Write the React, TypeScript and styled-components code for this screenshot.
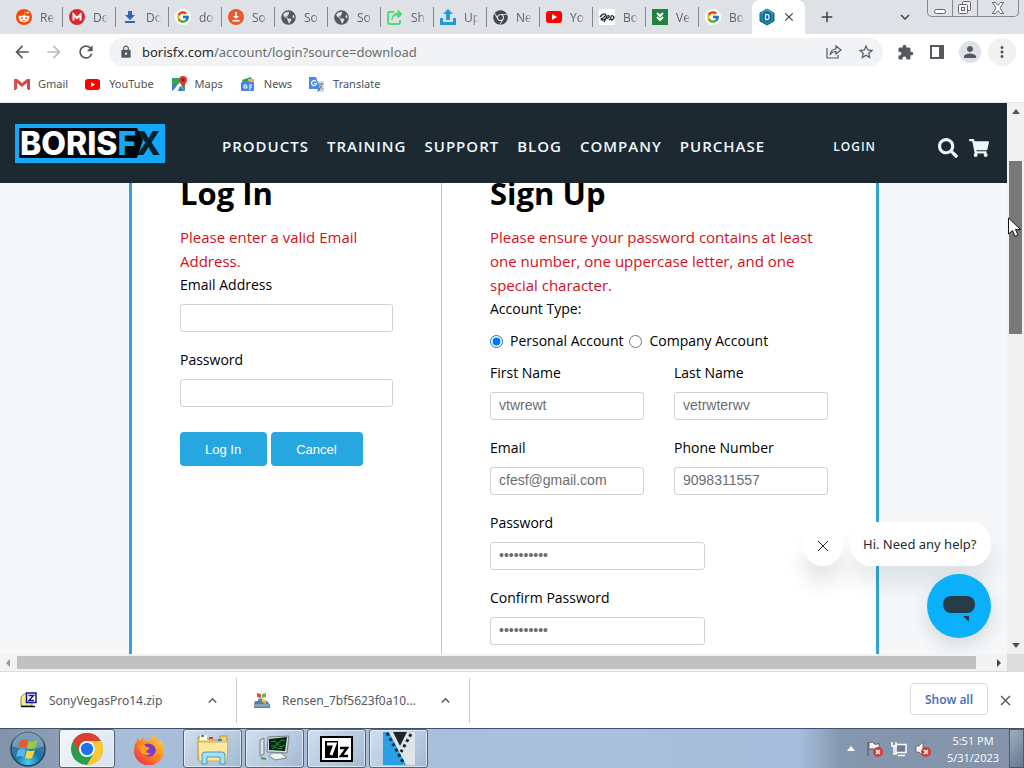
import React from 'react';
import styled, { createGlobalStyle } from 'styled-components';
import { FaChrome, FaSearch, FaShoppingCart, FaRedditAlien, FaGlobeAmericas } from 'react-icons/fa';
import { FcGoogle } from 'react-icons/fc';
import {
  MdArrowBack, MdArrowForward, MdRefresh, MdLock, MdStarBorder, MdExtension, MdPerson, MdMoreVert,
  MdClose, MdAdd, MdKeyboardArrowUp, MdKeyboardArrowDown,
} from 'react-icons/md';

const ui = '"Open Sans", "Noto Sans", sans-serif';
const noto = '"Noto Sans", "Open Sans", sans-serif';
const arial = '"Liberation Sans", Arial, sans-serif';

const Global = createGlobalStyle`
  * { box-sizing: border-box; }
  body { margin: 0; overflow: hidden; font-family: ${ui}; }
  button, input { font: inherit; margin: 0; }
  button { border: 0; padding: 0; background: none; color: inherit; }
  a { color: inherit; text-decoration: none; }
  p, h1 { margin: 0; }
  svg { display: block; flex: none; }
`;

const Desktop = styled.div`
  display: flex;
  flex-direction: column;
  height: 100vh;
  background: #fff;
`;

/* ---------- tab strip ---------- */
const TabStrip = styled.div`
  display: flex;
  flex: none;
  height: 34px;
  padding-left: 10px;
  background: #dee1e6;
  color: #5f6368;
`;
const Tab = styled.button`
  display: flex;
  align-items: center;
  gap: 8px;
  flex: none;
  width: 53px;
  height: 34px;
  padding-left: 6px;
  font-size: 12px;
  &::after {
    content: '';
    width: 1px;
    height: 20px;
    margin-left: -1px;
    background: #84888d;
  }
  &:nth-child(14)::after { background: none; }
`;
const TabTitle = styled.span`
  flex: 1;
  overflow: hidden;
  white-space: nowrap;
  text-align: left;
  -webkit-mask-image: linear-gradient(90deg, #000 60%, transparent 100%);
  mask-image: linear-gradient(90deg, #000 60%, transparent 100%);
`;
const ActiveTab = styled.div`
  display: flex;
  align-items: center;
  justify-content: space-between;
  flex: none;
  width: 53px;
  padding: 0 9px 0 7px;
  border-radius: 8px 8px 0 0;
  background: #fff;
  color: #3c4043;
`;
const StripButton = styled.button`
  display: grid;
  place-items: center;
  width: 44px;
  color: #3c4043;
`;
const Spacer = styled.div`
  flex: 1;
`;
const WindowButtons = styled.div`
  display: grid;
  grid-template-columns: 24px 25px 1fr;
  width: 92px;
  height: 17px;
  margin: 0 5px 0 0;
  border: 1px solid #85898e;
  border-top: 0;
  border-radius: 0 0 5px 5px;
`;
const WindowButton = styled.button`
  display: grid;
  place-items: center;
  & + & { border-left: 1px solid #85898e; }
`;

/* ---------- toolbar ---------- */
const Toolbar = styled.div`
  display: flex;
  align-items: center;
  flex: none;
  height: 36px;
  padding: 0 8px 0 12px;
  color: #55595e;
`;
const NavButtons = styled.div`
  display: flex;
  gap: 12px;
  margin-right: 13px;
`;
const IconButton = styled.button<{ $muted?: boolean }>`
  display: grid;
  place-items: center;
  width: 20px;
  height: 20px;
  color: ${(p) => (p.$muted ? '#b9bbbe' : 'inherit')};
`;
const Omnibox = styled.form`
  display: flex;
  align-items: center;
  flex: 1;
  height: 28px;
  padding: 0 7px 0 10px;
  gap: 9px;
  border-radius: 14px;
  background: #f1f3f4;
`;
const Url = styled.label`
  flex: 1;
  font-family: ${noto};
  font-size: 13px;
  color: #6a6e73;
  b { font-weight: 400; color: #27292c; }
`;
const BoxIcons = styled.div`
  display: flex;
  gap: 12px;
`;
const ToolIcons = styled.div`
  display: flex;
  align-items: center;
  gap: 12px;
  margin-left: 12px;
`;
const Avatar = styled.button`
  display: grid;
  place-items: center;
  width: 22px;
  height: 22px;
  border-radius: 50%;
  background: #dde1e8;
`;
const MenuButton = styled.button`
  display: grid;
  place-items: center;
  width: 28px;
  height: 28px;
  margin-left: -5px;
  border-radius: 50%;
  background: #f1f1f2;
`;

/* ---------- bookmarks ---------- */
const Bookmarks = styled.nav`
  display: flex;
  align-items: center;
  flex: none;
  gap: 17px;
  height: 33px;
  padding: 0 14px 5px;
  border-bottom: 1px solid #e4e6e8;
  font-family: ${noto};
  font-size: 11px;
  color: #505357;
`;
const Bookmark = styled.a`
  display: flex;
  align-items: center;
  gap: 8px;
`;

/* ---------- web page ---------- */
const Viewport = styled.main`
  display: grid;
  grid-template-columns: 1fr 17px;
  grid-template-rows: 1fr 18px;
  flex: 1;
  min-height: 0;
`;
const Page = styled.div`
  display: flex;
  flex-direction: column;
  position: relative;
  min-height: 0;
  overflow: hidden;
  background: #f5f7f9;
`;
const SiteHeader = styled.header`
  display: flex;
  align-items: center;
  flex: none;
  height: 80px;
  padding: 0 18px 0 15px;
  background: #1d2931;
  color: #eef7fb;
`;
const SiteNav = styled.nav`
  display: flex;
  gap: 18px;
  margin: 6px 0 0 57px;
  font-size: 15px;
  font-weight: 600;
  letter-spacing: 1px;
`;
const LoginLink = styled.a`
  margin: 6px 62px 0 0;
  font-size: 12px;
  font-weight: 600;
  letter-spacing: 1px;
`;
const HeaderIcons = styled.div`
  display: flex;
  gap: 11px;
  margin-top: 10px;
`;
const Panel = styled.section`
  display: grid;
  grid-template-columns: 310px 1fr;
  flex: 1;
  min-height: 0;
  margin: 0 128px 0 129px;
  border: solid #33a4d3;
  border-width: 0 3px;
  background: #fff;
  color: #000;
  font-size: 14px;
  line-height: 24px;
`;
const Column = styled.form<{ $divided?: boolean }>`
  padding: 0 48px;
  border-right: ${(p) => (p.$divided ? '1px solid #c4c4c4' : '0')};
`;
const Title = styled.h1`
  margin-bottom: 21px;
  font-size: 31px;
  font-weight: 700;
  line-height: 21px;
`;
const ErrorText = styled.p`
  color: #d40f20;
  font-size: 15px;
`;
const Field = styled.div<{ $width?: string }>`
  display: flex;
  flex-direction: column;
  width: ${(p) => p.$width ?? '100%'};
  height: 75px;
`;
const TextInput = styled.input`
  width: 100%;
  height: 28px;
  margin-top: 7px;
  padding: 0 8px 2px;
  border: 1px solid #d2d2d2;
  border-radius: 3px;
  outline: 0;
  background: #fff;
  color: #6a6e70;
  font-family: ${arial};
  font-size: 14px;
`;
const Buttons = styled.div`
  display: flex;
  gap: 4px;
  margin-top: 9px;
`;
const Primary = styled.button`
  height: 34px;
  padding: 2px 26px 0 25px;
  border-radius: 4px;
  background: #27a7df;
  color: #fff;
  font-family: ${arial};
  font-size: 13px;
`;
const RadioRow = styled.div`
  display: flex;
  gap: 6px;
  margin: 8px 0;
  white-space: nowrap;
`;
const RadioLabel = styled.label`
  display: flex;
  align-items: center;
  gap: 7px;
  input { width: 13px; height: 13px; accent-color: #0075ff; }
`;
const Pair = styled.div`
  display: grid;
  grid-template-columns: 1fr 1fr;
  gap: 30px;
`;

/* ---------- chat widget ---------- */
const Chat = styled.aside`
  display: flex;
  flex-direction: column;
  align-items: flex-end;
  gap: 8px;
  position: absolute;
  right: 16px;
  bottom: 16px;
`;
const ChatRow = styled.div`
  display: flex;
  gap: 8px;
`;
const ChatClose = styled.button`
  display: grid;
  place-items: center;
  width: 40px;
  height: 40px;
  margin-top: 4px;
  border-radius: 50%;
  background: #fff;
  box-shadow: 0 18px 20px rgba(30, 60, 60, 0.12);
`;
const ChatBubble = styled.div`
  height: 44px;
  min-width: 140px;
  padding: 0 10px 0 12px;
  border-radius: 20px;
  background: #fff;
  box-shadow: 0 18px 20px rgba(30, 60, 60, 0.1);
  color: #1f2a30;
  font-family: ${noto};
  font-size: 13px;
  line-height: 44px;
`;
const ChatOpen = styled.button`
  width: 64px;
  height: 64px;
  border-radius: 50%;
  background: #0bb0fb;
  box-shadow: 0 8px 18px rgba(30, 60, 60, 0.15);
`;

/* ---------- scroll bars ---------- */
const VScroll = styled.div`
  display: flex;
  flex-direction: column;
  align-items: center;
  position: relative;
  padding: 6px 0;
  background: #f1f1f1;
`;
const VThumb = styled.div`
  width: 13px;
  height: 173px;
  margin: 47px 0 auto;
  background: #787878;
`;
const Pointer = styled.svg`
  position: absolute;
  left: 0;
  top: 114px;
`;
const HScroll = styled.div`
  display: flex;
  align-items: center;
  gap: 6px;
  padding: 0 5px;
  border-bottom: 1px solid #dadada;
  background: #f3f3f3;
`;
const HThumb = styled.div`
  flex: 1;
  height: 13px;
  margin-right: 14px;
  background: #c0c0c0;
`;
const Corner = styled.div`
  background: #dcdcdc;
`;

/* ---------- downloads ---------- */
const Shelf = styled.div`
  display: flex;
  align-items: center;
  flex: none;
  height: 56px;
  padding: 0 10px 0 4px;
  color: #55585c;
`;
const Download = styled.div`
  display: flex;
  align-items: center;
  gap: 12px;
  flex: none;
  width: 233px;
  height: 45px;
  padding: 0 15px 0 16px;
  border-right: 1px solid #c9cbcd;
  font-family: ${noto};
  font-size: 12px;
`;
const FileName = styled.span`
  flex: 1;
  white-space: nowrap;
`;
const ShowAll = styled.button`
  width: 78px;
  height: 32px;
  margin: 0 9px 2px 0;
  border: 1px solid #d9dbdf;
  border-radius: 4px;
  color: #4468b5;
  font-size: 12px;
  font-weight: 600;
`;

/* ---------- taskbar ---------- */
const Taskbar = styled.footer`
  display: flex;
  align-items: stretch;
  flex: none;
  height: 40px;
  border-top: 1px solid #3c5270;
  background: linear-gradient(90deg, #7f92aa 0, #8c9fb7 58px, #a8bdd8 120px, #a9bfdb 60%, #a6bedc 78%, #8497ae 82%, #8393a9 100%);
`;
const Start = styled.button`
  display: grid;
  place-items: center;
  width: 55px;
  margin-right: 4px;
`;
const Task = styled.button<{ $width: number; $look?: 'active' | 'plain' }>`
  display: grid;
  place-items: center;
  width: ${(p) => p.$width}px;
  margin-right: 3px;
  border: 1px solid ${(p) => (p.$look === 'plain' ? 'transparent' : '#4d6380')};
  border-radius: 3px;
  background: ${(p) =>
    p.$look === 'plain' ? 'none'
      : p.$look === 'active' ? 'linear-gradient(135deg, #f4f7fb, #d8e1ed)'
        : 'linear-gradient(135deg, #d0deef, #a4bad4)'};
  box-shadow: ${(p) => (p.$look === 'plain' ? 'none' : 'inset 0 0 0 1px rgba(255,255,255,.55)')};
`;
const Tray = styled.div`
  display: flex;
  align-items: center;
  gap: 8px;
`;
const Clock = styled.time`
  width: 68px;
  color: #fff;
  font-size: 11px;
  line-height: 17px;
  text-align: center;
`;
const ShowDesktop = styled.button`
  width: 15px;
  margin-left: 2px;
  border: 1px solid #4a5b70;
  background: linear-gradient(135deg, #a0adbc, #65788f);
`;

const Disc = ({ fill, children }: { fill: string; children: React.ReactNode }) => (
  <svg width="16" height="16" viewBox="0 0 16 16"><circle cx="8" cy="8" r="8" fill={fill} />{children}</svg>
);

const tabs: { title: string; icon: React.ReactNode }[] = [
  { title: 'Re', icon: <Disc fill="#ff4500"><FaRedditAlien x="2" y="2" size={12} color="#fff" /></Disc> },
  { title: 'Do', icon: <Disc fill="#d9272e"><path d="M4.500 11.500V5.500L8 9l3.500-3.500v6" fill="none" stroke="#fff" strokeWidth="2" /></Disc> },
  { title: 'Do', icon: <svg width="16" height="16"><path d="M6 2h4v4h3l-5 5-5-5h3zM3 12h10v2H3z" fill="#2a66bd" /></svg> },
  { title: 'do', icon: <Disc fill="#fff"><FcGoogle x="1" y="1" size={14} /></Disc> },
  { title: 'So', icon: <Disc fill="#f0572b"><path d="M7 3h2v4h2L8 10 5 7h2zM4.500 11h7v1.500h-7z" fill="#fff" /></Disc> },
  { title: 'So', icon: <FaGlobeAmericas size={15} color="#55595e" /> },
  { title: 'So', icon: <FaGlobeAmericas size={15} color="#55595e" /> },
  { title: 'Sh', icon: <svg width="16" height="16" fill="none" stroke="#4fdb74" strokeWidth="2"><path d="M7 3H3q-2 0-2 2v8q0 2 2 2h8q2 0 2-2v-2" /><path d="M5 11q0-5 6-5v3l4-4-4-4v3q-6 0-6 7z" fill="#4fdb74" strokeWidth="1" /></svg> },
  { title: 'Up', icon: <svg width="16" height="16" fill="#1d9ae0"><path d="M8 0l5 5h-3v6H6V5H3zM0 9h3v4h10V9h3v7H0z" /></svg> },
  { title: 'Ne', icon: <FaChrome size={15} color="#44484d" /> },
  { title: 'Yo', icon: <svg width="16" height="16"><rect y="2" width="16" height="12" rx="3" fill="#f00" /><path d="M6 5l5 3-5 3z" fill="#fff" /></svg> },
  { title: 'Bo', icon: <svg width="16" height="16" fill="none" stroke="#222" strokeWidth="1.300"><rect width="16" height="16" fill="#fff" stroke="none" /><path d="M1 8q3-4 5-3t-2 4q-3 1-1 2 3 0 5-3M5 13l3-6q3-1 2 1t-3 1M10 11q2-1 2-3t2-1 0 3-2 0" /></svg> },
  { title: 'Ve', icon: <svg width="16" height="16" fill="none" stroke="#fff" strokeWidth="2"><rect width="16" height="16" fill="#23813f" stroke="none" /><path d="M5 4l3 3 3-3M5 8l3 3 3-3" /></svg> },
  { title: 'Bo', icon: <Disc fill="#fff"><FcGoogle x="1" y="1" size={14} /></Disc> },
];

const BorisIcon = () => (
  <svg width="16" height="18" viewBox="0 0 16 18">
    <path d="M8 1l7 4v8l-7 4-7-4V5z" fill="#1787b5" stroke="#195a78" />
    <path d="M8 1l7 4-7 4-7-4z" fill="#2ba6d0" />
    <path d="M4 5l4-2 4 2v7l-4 2-4-2z" fill="#15608a" />
    <path d="M6.500 6.500h2q1.500 0 1.500 2.500t-1.500 2.500h-2z" fill="none" stroke="#dff5ff" strokeWidth="1.300" />
  </svg>
);

const bookmarkIcons = {
  gmail: <svg width="16" height="16"><path d="M1 3v10h2V7l5 4 5-4v6h2V3h-2L8 7 3 3z" fill="#d84a42" /><path d="M0 3h2v11H0z" fill="#c85a62" /><path d="M14 3h2v11h-2z" fill="#bf4b55" /></svg>,
  youtube: <svg width="16" height="16"><rect x="0" y="3" width="15" height="11" rx="3" fill="#f00" /><path d="M6 6l4 2.500L6 11z" fill="#fff" /></svg>,
  maps: <svg width="16" height="16"><path d="M1 2h13v13H1z" fill="#36a457" /><path d="M8 8l6 7H3z" fill="#dfe5ea" /><path d="M1 15L11 4l3 3-8 8z" fill="#f5f5f5" /><path d="M1 10l4-3v4l-4 4z" fill="#3b78d8" /><path d="M9 10l5 5H7z" fill="#3b78d8" /><path d="M12 0a4 4 0 0 1 4 4q0 2-4 7-4-5-4-7a4 4 0 0 1 4-4z" fill="#d93a31" /><circle cx="12" cy="4" r="1.500" fill="#7a1812" /></svg>,
  news: <svg width="16" height="16"><path d="M2 4l9-3 2 6H3z" fill="#2f9e55" /><path d="M8 3h6v5H8z" fill="#f2b52c" /><path d="M3 5h6v4H3z" fill="#d95a45" /><rect x="1" y="6" width="13" height="9" rx="1" fill="#4486e6" /><path d="M7 9H4v3h3v-1.500H5.500M9 9h3M9 11h3M9 13h2" stroke="#fff" fill="none" /></svg>,
  translate: <svg width="16" height="16"><path d="M6 5h9v11H9z" fill="#d5dae1" /><path d="M8 16l2-4 2 1z" fill="#2f5db5" /><path d="M9 8h5M12 7v1m1 0q-1 4-3 5m0-4q2 3 4 4" stroke="#6f7f96" fill="none" /><path d="M0 1h7l4 12H0z" fill="#4a88ea" /><path d="M7 5.500A2.500 2.500 0 1 0 7.500 7.500H5" fill="none" stroke="#fff" strokeWidth="1.200" /></svg>,
};

const BorisLogo = () => (
  <svg width="150" height="39" viewBox="0 0 150 39" role="img" aria-label="Boris FX">
    <rect width="150" height="39" fill="#14a9f8" />
    <path d="M4 4h118l6 12-6 18H4z" fill="#02060a" />
    <text x="5" y="31" fontFamily="Inter, sans-serif" fontWeight="800" fontSize="32" fill="#fff">
      BORIS<tspan fill="#14a9f8">F</tspan><tspan fill="#07202d">X</tspan>
    </text>
  </svg>
);

const StartOrb = () => (
  <svg width="36" height="36" viewBox="0 0 36 36">
    <defs>
      <radialGradient id="orb" cx="50%" cy="90%" r="90%">
        <stop offset="0" stopColor="#46d2ee" /><stop offset=".4" stopColor="#1a75a6" /><stop offset="1" stopColor="#5d7f9c" />
      </radialGradient>
    </defs>
    <circle cx="18" cy="18" r="17" fill="url(#orb)" stroke="#22415e" strokeWidth="1.500" />
    <path d="M2 15A16 16 0 0 1 34 15Q18 22 2 15z" fill="#fff" opacity=".25" />
    <path d="M10 10q4-3 8-1l-2 8q-4-2-8 0z" fill="#ea5b28" />
    <path d="M19 10q4 2 9-1l-3 8q-4 2-8 0z" fill="#9aca3c" />
    <path d="M8 19q4-2 8 0l-2 7q-4-2-8 0z" fill="#58b9ee" />
    <path d="M17 19q4 2 8 0l-3 8q-4 1-7 0z" fill="#fbd33b" />
  </svg>
);
const ChromeIcon = () => (
  <svg width="32" height="32" viewBox="0 0 32 32">
    <circle cx="16" cy="16" r="16" fill="#2b9d4a" />
    <path d="M2.100 8A16 16 0 0 1 29.900 8H16a8 8 0 0 0-7 12z" fill="#dc4031" />
    <path d="M29.900 8A16 16 0 0 1 16 32l7-12a8 8 0 0 0-7-12z" fill="#fcc934" />
    <circle cx="16" cy="16" r="8" fill="#fff" /><circle cx="16" cy="16" r="6.200" fill="#1a73e8" />
  </svg>
);
const FirefoxIcon = () => (
  <svg width="32" height="32" viewBox="0 0 32 32">
    <defs>
      <linearGradient id="fox" x1="1" y1="0" x2="0.100" y2="1">
        <stop offset="0" stopColor="#ffe14a" /><stop offset=".5" stopColor="#ff8a1e" /><stop offset="1" stopColor="#f0264f" />
      </linearGradient>
    </defs>
    <path d="M19 1q5 4 6 8 1-1 1-3 5 5 5 11a15 15 0 0 1-30 1Q1 11 4 8V5l3 3 3-4q1 3 4 4 5 0 5-7z" fill="url(#fox)" />
    <path d="M11 12q3-3 9 0 4 3 2 8-3 5-9 3-4-2-4-6 3 3 6 0-1-1-4-5z" fill="#7a3bd0" />
    <path d="M5 13q4-3 9 1l3 1q-1 2-4 2 0 4 5 3-4 4-8 1-4-3-5-8z" fill="#ff9a24" />
  </svg>
);
const FolderIcon = () => (
  <svg width="34" height="32" viewBox="0 0 34 32">
    <path d="M2 4h9l2 3h11V3h7v24H2z" fill="#f0d57a" stroke="#ba9743" />
    <path d="M4 2h7v5H4z" fill="#fff" /><path d="M5 2h3v2H5z" fill="#36a336" /><path d="M13 4h4v2h-4z" fill="#da3c27" /><path d="M22 6h4v2h-4z" fill="#3c7fcf" />
    <path d="M2 9h30l-1 19H3z" fill="#fbe9a1" stroke="#cfae58" />
    <path d="M6 31V22q0-3 3-3h17q3 0 3 3v9h-5v-7H11v7z" fill="#a9ddf2" stroke="#4c9bc4" />
  </svg>
);
const MonitorIcon = () => (
  <svg width="32" height="30" viewBox="0 0 32 30">
    <path d="M1 6l4-2v16l-4 2z" fill="#dce2e6" stroke="#6f7c84" />
    <path d="M9 3l21-1-2 17-20-1z" fill="#d2dade" stroke="#747f85" />
    <path d="M10 5l18-2-2 14-16-1z" fill="#07260f" />
    <path d="M12 8l4-1 2 3 5-4 3 1M12 12h4l2-2 4 3 4-2M13 15l3-2 4 2 4-1" stroke="#23953b" fill="none" />
    <path d="M13 19h9l6 5-12 2-6-4z" fill="#eef1f3" stroke="#7c878d" /><path d="M2 24l5 1" stroke="#4b9a49" strokeWidth="2" />
  </svg>
);
const SevenZipIcon = () => (
  <svg width="33" height="26" viewBox="0 0 33 26">
    <rect x="1" y="1" width="31" height="24" fill="#fff" stroke="#000" strokeWidth="2" />
    <rect x="5" y="5" width="13" height="17" />
    <path d="M7 8h8l-4 11" fill="none" stroke="#fff" strokeWidth="3" />
    <path d="M20 12h7l-6 8h7" fill="none" stroke="#000" strokeWidth="2.500" />
  </svg>
);
const VegasIcon = () => (
  <svg width="32" height="33" viewBox="0 0 32 33">
    <path d="M0 0h32v33H0z" fill="#dfe5e9" /><path d="M0 0h6l17 33H0z" fill="#2b9fe5" />
    <path d="M10 0h14l-7 14z" fill="#20242b" />
    <path d="M4 1l17 31M28 2L18 20" stroke="#0e2a40" strokeWidth="3" strokeDasharray="3 3" />
  </svg>
);
const ErrorBadge = () => (
  <g><circle cx="11" cy="11" r="5" fill="#d53c37" /><path d="M9 9l4 4m0-4l-4 4" stroke="#fff" strokeWidth="1.500" /></g>
);

export default function App() {
  return (
    <Desktop>
      <Global />
      <TabStrip>
        {tabs.map((t, i) => (
          <Tab key={i}>{t.icon}<TabTitle>{t.title}</TabTitle></Tab>
        ))}
        <ActiveTab><BorisIcon /><button aria-label="Close tab"><MdClose size={14} /></button></ActiveTab>
        <StripButton aria-label="New tab"><MdAdd size={18} /></StripButton>
        <Spacer />
        <StripButton aria-label="Search tabs"><MdKeyboardArrowDown size={18} /></StripButton>
        <WindowButtons>
          <WindowButton aria-label="Minimize"><svg width="12" height="12"><rect x="0.500" y="7.500" width="11" height="4" rx="2" fill="#fff" stroke="#666" /></svg></WindowButton>
          <WindowButton aria-label="Restore"><svg width="14" height="14" fill="#f4f4f5" stroke="#666"><rect x="4.500" y="0.500" width="8" height="9" rx="1" /><rect x="0.500" y="3.500" width="9" height="9" rx="1" /><rect x="3.500" y="6.500" width="3" height="3" /></svg></WindowButton>
          <WindowButton aria-label="Close"><svg width="12" height="12" fill="#fff" stroke="#666"><path d="M.5.5h3L6 3.500 8.500.5h3L8 6l3.500 5.500h-3L6 8.500l-2.500 3h-3L4 6z" /></svg></WindowButton>
        </WindowButtons>
      </TabStrip>

      <Toolbar>
        <NavButtons>
          <IconButton aria-label="Back"><MdArrowBack size={20} /></IconButton>
          <IconButton aria-label="Forward" $muted><MdArrowForward size={20} /></IconButton>
          <IconButton aria-label="Reload"><MdRefresh size={20} /></IconButton>
        </NavButtons>
        <Omnibox>
          <MdLock size={14} />
          <Url><b>borisfx.com</b>/account/login?source=download</Url>
          <BoxIcons>
            <IconButton type="button" aria-label="Share">
              <svg width="16" height="16" fill="none" stroke="#55595e" strokeWidth="1.200"><path d="M1 4v10h11v-3" /><path d="M4 11q1-6 6-6V2l5 4-5 4V7.500Q6 7.500 4 11z" /></svg>
            </IconButton>
            <IconButton type="button" aria-label="Bookmark"><MdStarBorder size={18} /></IconButton>
          </BoxIcons>
        </Omnibox>
        <ToolIcons>
          <IconButton aria-label="Extensions"><MdExtension size={17} /></IconButton>
          <IconButton aria-label="Side panel"><svg width="14" height="14"><path d="M1 1h12v12H1z" fill="none" stroke="#55595e" strokeWidth="2" /><path d="M9 1h4v12H9z" fill="#55595e" /></svg></IconButton>
          <Avatar aria-label="Profile"><MdPerson size={18} /></Avatar>
          <MenuButton aria-label="Menu"><MdMoreVert size={18} /></MenuButton>
        </ToolIcons>
      </Toolbar>

      <Bookmarks>
        <Bookmark href="#">{bookmarkIcons.gmail}Gmail</Bookmark>
        <Bookmark href="#">{bookmarkIcons.youtube}YouTube</Bookmark>
        <Bookmark href="#">{bookmarkIcons.maps}Maps</Bookmark>
        <Bookmark href="#">{bookmarkIcons.news}News</Bookmark>
        <Bookmark href="#">{bookmarkIcons.translate}Translate</Bookmark>
      </Bookmarks>

      <Viewport>
        <Page>
          <SiteHeader>
            <a href="#"><BorisLogo /></a>
            <SiteNav>
              {['PRODUCTS', 'TRAINING', 'SUPPORT', 'BLOG', 'COMPANY', 'PURCHASE'].map((n) => <a key={n} href="#">{n}</a>)}
            </SiteNav>
            <Spacer />
            <LoginLink href="#">LOGIN</LoginLink>
            <HeaderIcons>
              <button aria-label="Search"><FaSearch size={20} /></button>
              <button aria-label="Cart"><FaShoppingCart size={20} /></button>
            </HeaderIcons>
          </SiteHeader>
          <Panel>
            <Column $divided>
              <Title>Log In</Title>
              <ErrorText>Please enter a valid Email Address.</ErrorText>
              <Field><label htmlFor="le">Email Address</label><TextInput id="le" /></Field>
              <Field><label htmlFor="lp">Password</label><TextInput id="lp" type="password" /></Field>
              <Buttons><Primary type="button">Log In</Primary><Primary type="button">Cancel</Primary></Buttons>
            </Column>
            <Column>
              <Title>Sign Up</Title>
              <ErrorText>Please ensure your password contains at least one number, one uppercase letter, and one special character.</ErrorText>
              <p>Account Type:</p>
              <RadioRow>
                <RadioLabel><input type="radio" name="type" defaultChecked />Personal Account</RadioLabel>
                <RadioLabel><input type="radio" name="type" />Company Account</RadioLabel>
              </RadioRow>
              <Pair>
                <Field><label htmlFor="fn">First Name</label><TextInput id="fn" defaultValue="vtwrewt" /></Field>
                <Field><label htmlFor="ln">Last Name</label><TextInput id="ln" defaultValue="vetrwterwv" /></Field>
              </Pair>
              <Pair>
                <Field><label htmlFor="em">Email</label><TextInput id="em" defaultValue="cfesf@gmail.com" /></Field>
                <Field><label htmlFor="ph">Phone Number</label><TextInput id="ph" defaultValue="9098311557" /></Field>
              </Pair>
              <Field $width="215px"><label htmlFor="pw">Password</label><TextInput id="pw" type="password" defaultValue="abcdefghij" /></Field>
              <Field $width="215px"><label htmlFor="cp">Confirm Password</label><TextInput id="cp" type="password" defaultValue="abcdefghij" /></Field>
            </Column>
          </Panel>
          <Chat>
            <ChatRow>
              <ChatClose aria-label="Dismiss"><svg width="12" height="12"><path d="M1 1l10 10M11 1L1 11" stroke="#222" /></svg></ChatClose>
              <ChatBubble>Hi. Need any help?</ChatBubble>
            </ChatRow>
            <ChatOpen aria-label="Open chat">
              <svg width="64" height="64"><rect x="16" y="22" width="32" height="17" rx="8" fill="#263d49" /><path d="M36 42h6v6z" fill="#263d49" /></svg>
            </ChatOpen>
          </Chat>
        </Page>
        <VScroll>
          <svg width="8" height="5"><path d="M0 5l4-5 4 5z" fill="#555" /></svg>
          <VThumb />
          <svg width="8" height="5"><path d="M0 0l4 5 4-5z" fill="#555" /></svg>
          <Pointer width="14" height="22"><path d="M1.500 1v16l4-3.500 2.500 6 3-1.500-2.500-5.500h5z" fill="#fff" stroke="#111" /></Pointer>
        </VScroll>
        <HScroll>
          <svg width="6" height="8"><path d="M5 0L1 4l4 4z" fill="#999" /></svg>
          <HThumb />
          <svg width="6" height="8"><path d="M1 0l4 4-4 4z" fill="#444" /></svg>
        </HScroll>
        <Corner />
      </Viewport>

      <Shelf>
        <Download>
          <svg width="17" height="17"><path d="M1 5l3-3h8v12H1z" fill="#f1ee8c" stroke="#85852f" /><path d="M1 14.500h14" stroke="#111" strokeWidth="1.500" /><rect x="6.500" y="1" width="9.500" height="9.500" fill="#fff" stroke="#15158c" strokeWidth="1.500" /><path d="M8.500 3.500h5l-4.500 5h5" fill="none" stroke="#15158c" strokeWidth="1.500" /></svg>
          <FileName>SonyVegasPro14.zip</FileName>
          <button aria-label="Options"><MdKeyboardArrowUp size={17} /></button>
        </Download>
        <Download>
          <svg width="17" height="17"><path d="M2 9h12l3 4v3H1v-4z" fill="#5b7c96" /><path d="M1 12h15v3H1z" fill="#7fa3bd" /><path d="M4 1l4 1v4L4 5z" fill="#dd552b" /><path d="M9 2l4-1v4L9 6z" fill="#76b13c" /><path d="M5 7l4-1v4H5z" fill="#3d90d6" /><path d="M9 7l4 1v4L9 10z" fill="#f0c032" /></svg>
          <FileName>Rensen_7bf5623f0a10...</FileName>
          <button aria-label="Options"><MdKeyboardArrowUp size={17} /></button>
        </Download>
        <Spacer />
        <ShowAll>Show all</ShowAll>
        <button aria-label="Close downloads"><MdClose size={17} /></button>
      </Shelf>

      <Taskbar>
        <Start aria-label="Start"><StartOrb /></Start>
        <Task $width={56} $look="active" aria-label="Chrome"><ChromeIcon /></Task>
        <Task $width={62} $look="plain" aria-label="Firefox"><FirefoxIcon /></Task>
        <Task $width={59} aria-label="Explorer"><FolderIcon /></Task>
        <Task $width={59} aria-label="System monitor"><MonitorIcon /></Task>
        <Task $width={59} aria-label="7-Zip"><SevenZipIcon /></Task>
        <Task $width={59} aria-label="Vegas Pro"><VegasIcon /></Task>
        <Spacer />
        <Tray>
          <svg width="16" height="5"><path d="M4 5l4-5 4 5z" fill="#fff" /></svg>
          <svg width="16" height="16"><path d="M1 1v14M2 1.500q4-1 5 1t5 0v7q-4 1-5-1t-5 0z" fill="#f5f5f5" stroke="#333" strokeWidth=".6" /><ErrorBadge /></svg>
          <svg width="16" height="16"><rect x="5" y="3.500" width="10" height="8" fill="#6d7d90" stroke="#fff" strokeWidth="1.500" /><path d="M7 14.500h7M1 1v4h4V1M3 5v8h3" fill="none" stroke="#fff" strokeWidth="1.500" /></svg>
          <svg width="16" height="16"><path d="M1 5h3l4-4v14l-4-4H1z" fill="#f5f5f5" stroke="#444" strokeWidth=".6" /><ErrorBadge /></svg>
          <Clock>5:51 PM<br />5/31/2023</Clock>
        </Tray>
        <ShowDesktop aria-label="Show desktop" />
      </Taskbar>
    </Desktop>
  );
}
